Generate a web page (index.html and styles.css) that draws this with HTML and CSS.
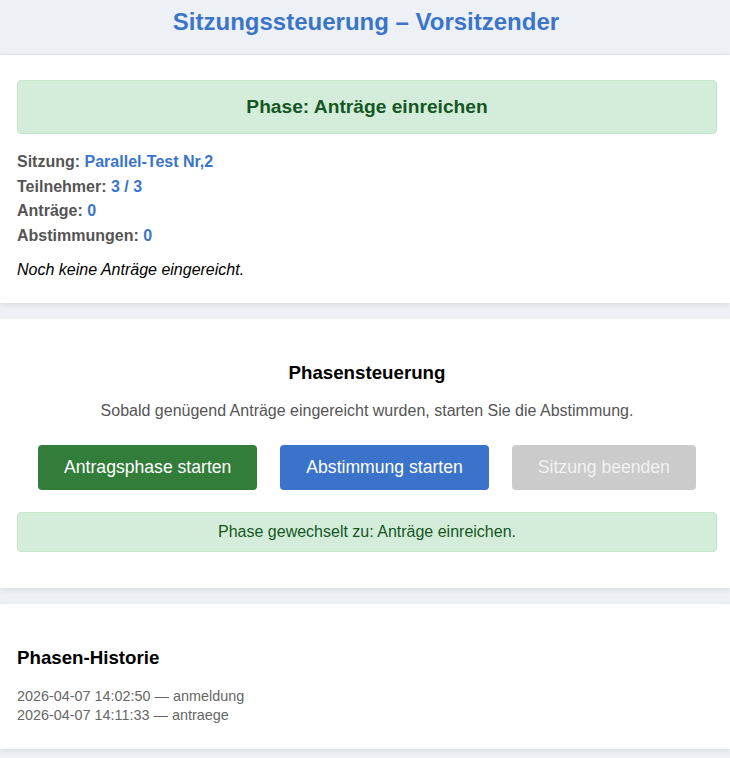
FILE: index.html
```html
<!DOCTYPE html>
<html>
	<head>
		<meta charset="utf-8">
		<title>Sitzungssteuerung</title>
		<link rel="stylesheet" href="styles.css">
	</head>
	<body>
		<header>
			<h1>Sitzungssteuerung – Vorsitzender</h1>
		</header>
		<section class="card">
			<div class="phase">Phase: Anträge einreichen</div>
			<p class="info"><strong>Sitzung:</strong> <span class="value">Parallel-Test Nr,2</span></p>
			<p class="info"><strong>Teilnehmer:</strong> <span class="value">3 / 3</span></p>
			<p class="info"><strong>Anträge:</strong> <span class="value">0</span></p>
			<p class="info"><strong>Abstimmungen:</strong> <span class="value">0</span></p>
			<p class="empty">Noch keine Anträge eingereicht.</p>
		</section>
		<section class="card center">
			<h2>Phasensteuerung</h2>
			<p class="hint">Sobald genügend Anträge eingereicht wurden, starten Sie die Abstimmung.</p>
			<div class="buttons">
				<button class="green">Antragsphase starten</button>
				<button class="blue">Abstimmung starten</button>
				<button class="disabled" disabled>Sitzung beenden</button>
			</div>
			<div class="message">Phase gewechselt zu: Anträge einreichen.</div>
		</section>
		<section class="card history-card">
			<h2>Phasen-Historie</h2>
			<ul class="history">
				<li>2026-04-07 14:02:50 — anmeldung</li>
				<li>2026-04-07 14:11:33 — antraege</li>
			</ul>
		</section>
	</body>
</html>
```

FILE: styles.css
```css
body {
	background: #edf1f5;
	color: #000;
	font-family: "Liberation Sans", Arial, sans-serif;
	font-size: 16px;
	margin: 0;
}
header {
	height: 54px;
	border-bottom: 1px solid #e2e8ee;
	display: flex;
	align-items: center;
	justify-content: center;
	padding-left: 2px;
}
h1 {
	color: #3a75c9;
	font-size: 24px;
	margin: 0 0 11px;
}
.card {
	background: #fff;
	box-shadow: 0 2px 5px rgba(0, 0, 0, .08);
	margin-bottom: 16px;
	padding: 25px 13px 24px 17px;
}
.phase {
	background: #d4edda;
	border: 1px solid #c3e6cb;
	border-radius: 4px;
	color: #155724;
	font-size: 19.2px;
	font-weight: bold;
	height: 52px;
	line-height: 52px;
	margin-bottom: 16px;
	text-align: center;
}
.info {
	color: #555;
	line-height: 24.5px;
	margin: 0;
}
.info .value {
	color: #3a75c9;
	font-weight: bold;
}
.empty {
	font-style: italic;
	margin: 13px 0 0;
}
.center {
	padding-top: 43px;
	padding-bottom: 36px;
	text-align: center;
}
h2 {
	font-size: 18.72px;
	margin: 0 0 18px;
}
.hint {
	color: #555;
	margin: 0 0 25px;
}
.buttons {
	display: flex;
	gap: 23px;
	justify-content: center;
	margin-bottom: 22px;
}
button {
	border: 0;
	border-radius: 4px;
	color: #fff;
	font-family: inherit;
	font-size: 17.6px;
	height: 45px;
	padding: 0 26px;
}
.green {
	background: #327d3a;
}
.blue {
	background: #3a73c9;
}
.disabled {
	background: #cbcbcb;
	color: #f2f2f2;
}
.message {
	background: #d4edda;
	border: 1px solid #c3e6cb;
	border-radius: 4px;
	color: #155724;
	line-height: 38px;
}
.history-card {
	padding-top: 43px;
	padding-bottom: 25px;
}
.history {
	color: #666;
	font-size: 14.4px;
	line-height: 18.5px;
	list-style: none;
	margin: 0;
	padding: 0;
}
```
